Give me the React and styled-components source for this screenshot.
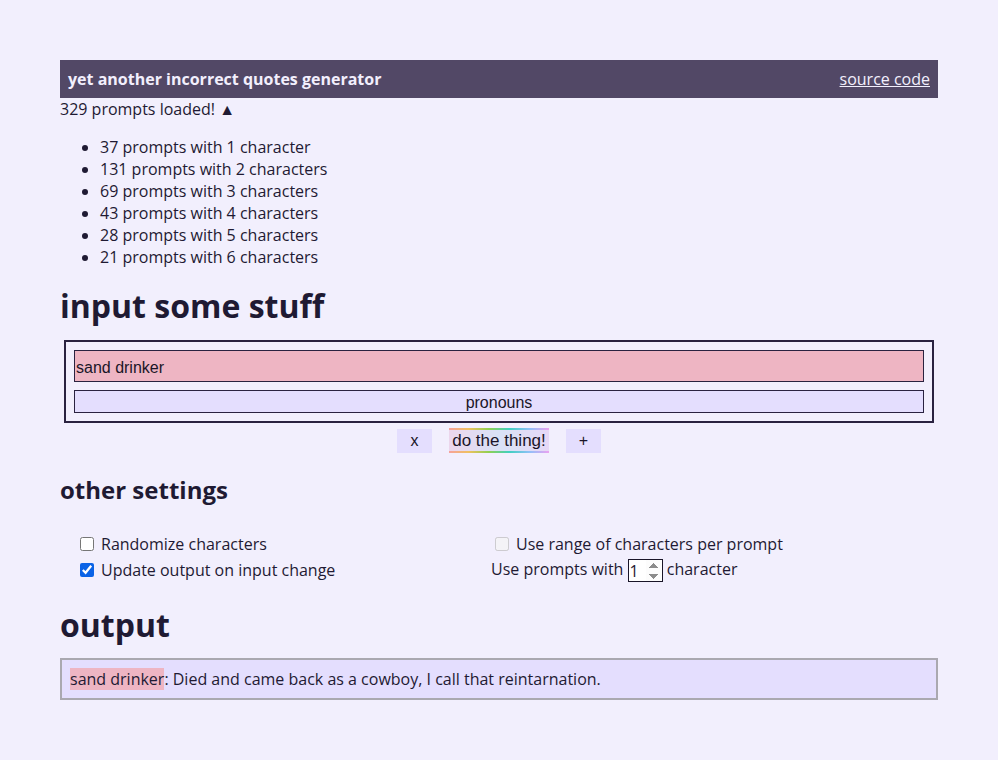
import styled, { createGlobalStyle } from "styled-components";

const text = "#1f1a33";
const bar = "#524866";
const pink = "#eeb5c3";
const lavender = "#e4defe";

const GlobalStyle = createGlobalStyle`
    body {
        margin: 0;
        background: #f2effd;
        color: ${text};
        font-family: "Open Sans", "Noto Sans", sans-serif;
        font-size: 16px;
    }
`;

const prompts = [
    [37, 1], [131, 2], [69, 3], [43, 4], [28, 5], [21, 6],
];

export default function App() {
    return (
        <Page>
            <GlobalStyle />
            <Header>
                <Title>yet another incorrect quotes generator</Title>
                <SourceLink href="#">source code</SourceLink>
            </Header>
            <Loaded>329 prompts loaded! ▲</Loaded>
            <PromptList>
                {prompts.map(([n, c]) => (
                    <li key={c}>{n} prompts with {c} character{c > 1 ? "s" : ""}</li>
                ))}
            </PromptList>

            <BigHeading>input some stuff</BigHeading>
            <InputBox>
                <NameInput defaultValue="sand drinker" />
                <PronounInput placeholder="pronouns" />
            </InputBox>
            <ButtonRow>
                <SmallBtn>x</SmallBtn>
                <RainbowBtn>do the thing!</RainbowBtn>
                <SmallBtn>+</SmallBtn>
            </ButtonRow>

            <SubHeading>other settings</SubHeading>
            <Settings>
                <Option>
                    <input type="checkbox" />
                    <span>Randomize characters</span>
                </Option>
                <Option>
                    <input type="checkbox" disabled />
                    <span>Use range of characters per prompt</span>
                </Option>
                <Option>
                    <input type="checkbox" defaultChecked />
                    <span>Update output on input change</span>
                </Option>
                <Plain>
                    Use prompts with <NumberInput type="number" defaultValue={1} /> character
                </Plain>
            </Settings>

            <OutputHeading>output</OutputHeading>
            <OutputBox>
                <Name>sand drinker</Name>: Died and came back as a cowboy, I call that reintarnation.
            </OutputBox>
        </Page>
    );
}

const Page = styled.div`
    padding: 60px 60px 40px;
`;

const Header = styled.header`
    height: 38px;
    padding: 0 8px;
    background: ${bar};
    display: flex;
    align-items: center;
    justify-content: space-between;
    color: #f2effd;
`;

const Title = styled.div`
    font-weight: 700;
`;

const SourceLink = styled.a`
    color: #f2effd;
    text-decoration: underline;
`;

const Loaded = styled.div`
    line-height: 22px;
`;

const PromptList = styled.ul`
    margin: 16px 0;
    padding-left: 40px;
    line-height: 22px;
`;

const BigHeading = styled.h1`
    font-size: 32px;
    font-weight: 700;
    margin: 16px 0 12px;
    line-height: 44px;
`;

const InputBox = styled.div`
    margin: 0 4px;
    border: 2px solid #2a2240;
    padding: 8px;
    display: flex;
    flex-direction: column;
    gap: 8px;
`;

const BaseInput = styled.input`
    box-sizing: border-box;
    width: 100%;
    margin: 0;
    border: 1px solid #2a2240;
    font-family: "Liberation Sans", Arial, sans-serif;
    font-size: 16px;
    color: #1a1528;
    outline: none;
`;

const NameInput = styled(BaseInput)`
    height: 32px;
    padding: 3px 1px 0;
    background: ${pink};
`;

const PronounInput = styled(BaseInput)`
    height: 23px;
    padding: 2px 1px 0;
    background: ${lavender};
    text-align: center;
    &::placeholder {
        color: #1a1528;
        opacity: 1;
    }
`;

const ButtonRow = styled.div`
    display: flex;
    justify-content: center;
    align-items: flex-start;
    gap: 17px;
    margin-top: 6px;
`;

const SmallBtn = styled.button`
    width: 35px;
    height: 24px;
    border: none;
    background: ${lavender};
    font-family: "Liberation Sans", Arial, sans-serif;
    font-size: 16px;
    color: #1a1528;
    padding: 0;
`;

const RainbowBtn = styled(SmallBtn)`
    width: 100px;
    height: 25px;
    margin-top: -1px;
    font-size: 17px;
    border-top: 2px solid;
    border-bottom: 2px solid;
    border-image: linear-gradient(to right, #f7a0a0, #f0c060, #90d050, #40d0c0, #90c0f8, #f0a0f0) 1;
    background: linear-gradient(to right, #ecd6ec, #d9e2f6, #e6d8f6);
`;

const SubHeading = styled.h2`
    font-size: 24px;
    font-weight: 700;
    margin: 20px 0 0;
    line-height: 33px;
`;

const Settings = styled.div`
    display: grid;
    grid-template-columns: 415px 1fr;
    row-gap: 3px;
    margin: 27px 0 0 16px;
`;

const Option = styled.label`
    display: flex;
    align-items: center;
    line-height: 22px;
    gap: 4px;
    input {
        margin: 3px 3px 3px 4px;
        width: 14px;
        height: 14px;
        accent-color: #0b63e6;
    }
`;

const Plain = styled.div`
    line-height: 22px;
`;

const NumberInput = styled.input`
    box-sizing: border-box;
    width: 35px;
    height: 23px;
    margin: 0;
    padding: 0 1px;
    border: 1px solid #1a1528;
    background: #fff;
    font-family: "Open Sans", sans-serif;
    font-size: 16px;
    color: ${text};
    vertical-align: middle;
    &::-webkit-inner-spin-button {
        opacity: 1;
    }
`;

const OutputHeading = styled(BigHeading)`
    margin: 21px 0 11px;
`;

const OutputBox = styled.div`
    border: 2px solid #aaa8b0;
    background: ${lavender};
    padding: 8px;
    line-height: 22px;
`;

const Name = styled.span`
    background: ${pink};
`;
